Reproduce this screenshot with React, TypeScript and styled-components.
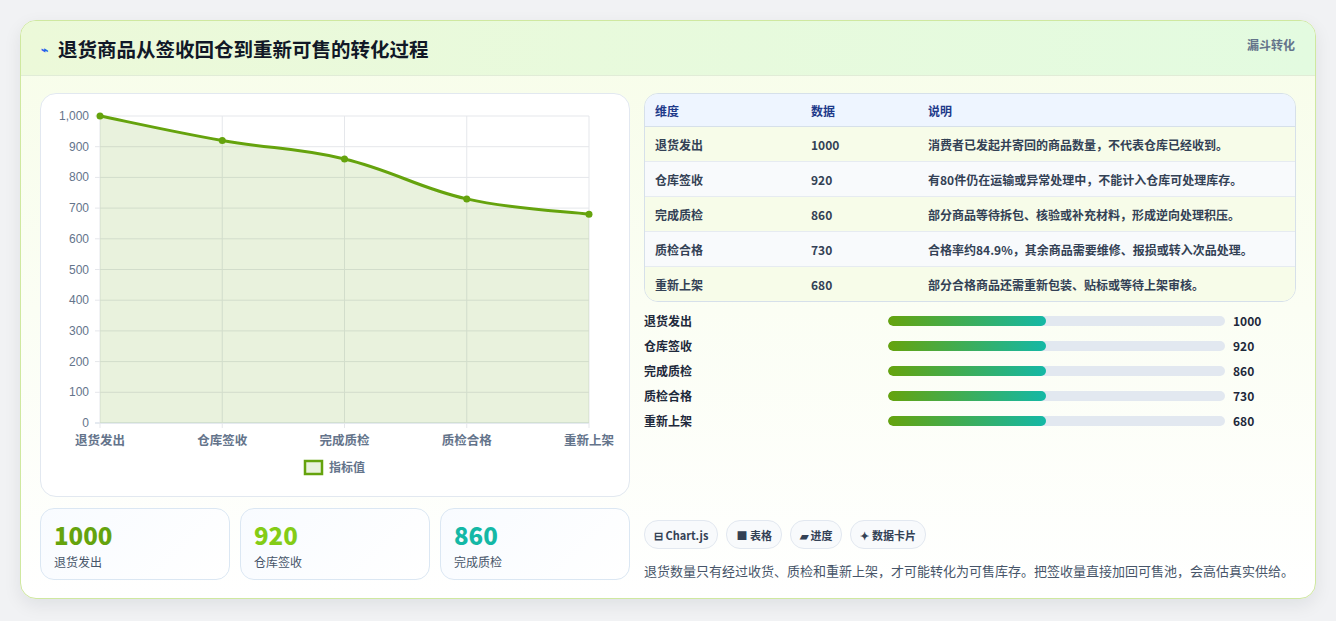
import React from 'react';
import styled, { createGlobalStyle } from 'styled-components';

const GlobalStyle = createGlobalStyle`
  html, body { margin: 0; padding: 0; background: #f1f2f4; }
  body { font-family: "Noto Sans CJK SC", "Noto Sans", sans-serif; color: #1e293b; }
`;

const rows = [
  { name: '退货发出', value: 1000, note: '消费者已发起并寄回的商品数量，不代表仓库已经收到。' },
  { name: '仓库签收', value: 920, note: '有80件仍在运输或异常处理中，不能计入仓库可处理库存。' },
  { name: '完成质检', value: 860, note: '部分商品等待拆包、核验或补充材料，形成逆向处理积压。' },
  { name: '质检合格', value: 730, note: '合格率约84.9%，其余商品需要维修、报损或转入次品处理。' },
  { name: '重新上架', value: 680, note: '部分合格商品还需重新包装、贴标或等待上架审核。' },
];

const Page = styled.div`
  padding: 20px 20px 21px 20px;
`;

const Card = styled.div`
  border: 1px solid #cfe8a0;
  border-radius: 16px;
  background: linear-gradient(180deg, #f7fde9 0%, #ffffff 100%);
  box-shadow: 0 6px 18px rgba(15, 23, 42, 0.08);
  overflow: hidden;
`;

const Header = styled.div`
  height: 54px;
  display: flex;
  justify-content: space-between;
  padding: 0 20px;
  background: linear-gradient(90deg, #ecf9d9 0%, #e3fbe0 100%);
  border-bottom: 1px solid #e1ecd7;
`;

const Title = styled.h1`
  margin: 0;
  display: flex;
  align-items: center;
  gap: 10px;
  font-size: 19.5px;
  font-weight: 700;
  color: #111827;
`;

const Bolt = styled.span`
  color: #2563eb;
  font-size: 12px;
`;

const Tag = styled.span`
  margin-top: 15px;
  font-size: 12px;
  font-weight: 700;
  color: #64748b;
`;

const Body = styled.div`
  display: grid;
  grid-template-columns: 590px 652px;
  gap: 14px;
  padding: 17px 19px 18px 19px;
`;

const Col = styled.div`
  display: flex;
  flex-direction: column;
`;

const ChartBox = styled.div`
  height: 402px;
  border: 1px solid #e2e8f0;
  border-radius: 16px;
  background: #fff;
`;

const Stats = styled.div`
  display: grid;
  grid-template-columns: repeat(3, 1fr);
  gap: 10px;
  margin-top: 11px;
`;

const Stat = styled.div`
  height: 72px;
  box-sizing: border-box;
  border: 1px solid #dbe7f3;
  border-radius: 14px;
  background: linear-gradient(135deg, #f8fbff, #ffffff);
  padding: 12px 13px;
`;

const StatNum = styled.div<{ $c: string }>`
  font-size: 24px;
  font-weight: 900;
  line-height: 28px;
  color: ${p => p.$c};
`;

const StatLabel = styled.div`
  font-size: 12px;
  color: #475569;
  margin-top: 4px;
`;

const Table = styled.table`
  width: 100%;
  border-collapse: separate;
  border-spacing: 0;
  border: 1px solid #d6e0ea;
  border-radius: 14px;
  overflow: hidden;
  font-size: 12px;
  font-weight: 700;
`;

const Th = styled.th`
  text-align: left;
  height: 32px;
  padding: 0 10px;
  background: #eef5ff;
  color: #1e3a8a;
  border-bottom: 1px solid #d6e0ea;
  font-weight: 700;
`;

const Td = styled.td<{ $alt: boolean }>`
  height: 34px;
  padding: 0 10px;
  background: ${p => (p.$alt ? '#f8fafc' : '#f7fce9')};
  color: #334155;
  border-bottom: 1px solid #e6ebf1;
  tr:last-child & { border-bottom: none; }
`;

const Bars = styled.div`
  display: flex;
  flex-direction: column;
  gap: 9px;
  margin-top: 10px;
`;

const BarRow = styled.div`
  display: grid;
  grid-template-columns: 236px 337px 1fr;
  align-items: center;
  gap: 8px;
  font-size: 12px;
  font-weight: 700;
  height: 16px;
`;

const Track = styled.div`
  height: 10px;
  border-radius: 5px;
  background: #e2e8f0;
  overflow: hidden;
`;

const Fill = styled.div`
  height: 100%;
  border-radius: 5px;
  background: linear-gradient(90deg, #65a30d, #14b8a6);
`;

const Chips = styled.div`
  display: flex;
  gap: 8px;
  margin-top: auto;
`;

const Chip = styled.span`
  height: 27px;
  display: inline-flex;
  align-items: center;
  padding: 0 9px;
  border: 1px solid #e2e8f0;
  border-radius: 14px;
  background: #f8fafc;
  font-size: 11px;
  font-weight: 700;
  color: #334155;
`;

const Desc = styled.p`
  margin: 12px 0 0;
  font-size: 13px;
  color: #475569;
`;

const X0 = 99, X1 = 588, Y0 = 422, YH = 307;
const pts = rows.map((r, i) => [X0 + (i * (X1 - X0)) / 4, Y0 - (r.value / 1000) * YH]);

function curve() {
  let d = `M${pts[0][0]},${pts[0][1]}`;
  for (let i = 0; i < pts.length - 1; i++) {
    const p0 = pts[i - 1] || pts[i], p1 = pts[i], p2 = pts[i + 1], p3 = pts[i + 2] || p2;
    const t = 0.4 / 2;
    const c1 = [p1[0] + (p2[0] - p0[0]) * t, p1[1] + (p2[1] - p0[1]) * t];
    const c2 = [p2[0] - (p3[0] - p1[0]) * t, p2[1] - (p3[1] - p1[1]) * t];
    d += ` C${c1[0]},${c1[1]} ${c2[0]},${c2[1]} ${p2[0]},${p2[1]}`;
  }
  return d;
}

const Chart = () => {
  const line = curve();
  return (
    <svg width="590" height="402" viewBox="40 93 590 402" fontFamily='"Liberation Sans", "Noto Sans CJK SC", sans-serif'>
      {Array.from({ length: 11 }, (_, i) => {
        const y = Y0 - (i * YH) / 10;
        return (
          <g key={i}>
            <line x1={X0 - 5} x2={X1} y1={y} y2={y} stroke={i === 0 ? '#cbd5e1' : '#e5e7eb'} />
            <text x={88} y={y + 4} fontSize="12" fill="#64748b" textAnchor="end">
              {i === 10 ? '1,000' : i * 100}
            </text>
          </g>
        );
      })}
      {pts.map(([x], i) => (
        <line key={i} x1={x} x2={x} y1={115} y2={Y0 + 5} stroke="#e5e7eb" />
      ))}
      <path d={`${line} L${X1},${Y0} L${X0},${Y0} Z`} fill="rgba(101,163,13,0.14)" />
      <path d={line} fill="none" stroke="#65a30d" strokeWidth="3" />
      {pts.map(([x, y], i) => (
        <circle key={i} cx={x} cy={y} r="3.5" fill="#65a30d" />
      ))}
      {rows.map((r, i) => (
        <text key={i} x={pts[i][0]} y={444} fontSize="12.5" fontWeight="700" fill="#64748b" textAnchor="middle" fontFamily='"Noto Sans CJK SC", sans-serif'>
          {r.name}
        </text>
      ))}
      <rect x={304} y={460} width={17} height={13} fill="rgba(101,163,13,0.14)" stroke="#65a30d" strokeWidth="2.5" />
      <text x={328} y={471} fontSize="12" fontWeight="700" fill="#64748b" fontFamily='"Noto Sans CJK SC", sans-serif'>指标值</text>
    </svg>
  );
};

const statColors = ['#65a30d', '#84cc16', '#14b8a6'];

export default function App() {
  return (
    <Page>
      <GlobalStyle />
      <Card>
        <Header>
          <Title><Bolt>⌁</Bolt>退货商品从签收回仓到重新可售的转化过程</Title>
          <Tag>漏斗转化</Tag>
        </Header>
        <Body>
          <Col>
            <ChartBox><Chart /></ChartBox>
            <Stats>
              {rows.slice(0, 3).map((r, i) => (
                <Stat key={r.name}>
                  <StatNum $c={statColors[i]}>{r.value}</StatNum>
                  <StatLabel>{r.name}</StatLabel>
                </Stat>
              ))}
            </Stats>
          </Col>
          <Col>
            <Table>
              <colgroup>
                <col style={{ width: 156 }} />
                <col style={{ width: 117 }} />
                <col />
              </colgroup>
              <thead>
                <tr><Th>维度</Th><Th>数据</Th><Th>说明</Th></tr>
              </thead>
              <tbody>
                {rows.map((r, i) => (
                  <tr key={r.name}>
                    <Td $alt={i % 2 === 1}>{r.name}</Td>
                    <Td $alt={i % 2 === 1}>{r.value}</Td>
                    <Td $alt={i % 2 === 1}>{r.note}</Td>
                  </tr>
                ))}
              </tbody>
            </Table>
            <Bars>
              {rows.map(r => (
                <BarRow key={r.name}>
                  <span>{r.name}</span>
                  <Track><Fill style={{ width: '47%' }} /></Track>
                  <span>{r.value}</span>
                </BarRow>
              ))}
            </Bars>
            <Chips>
              <Chip>⊟ Chart.js</Chip>
              <Chip>■ 表格</Chip>
              <Chip>▰ 进度</Chip>
              <Chip>✦ 数据卡片</Chip>
            </Chips>
            <Desc>退货数量只有经过收货、质检和重新上架，才可能转化为可售库存。把签收量直接加回可售池，会高估真实供给。</Desc>
          </Col>
        </Body>
      </Card>
    </Page>
  );
}
